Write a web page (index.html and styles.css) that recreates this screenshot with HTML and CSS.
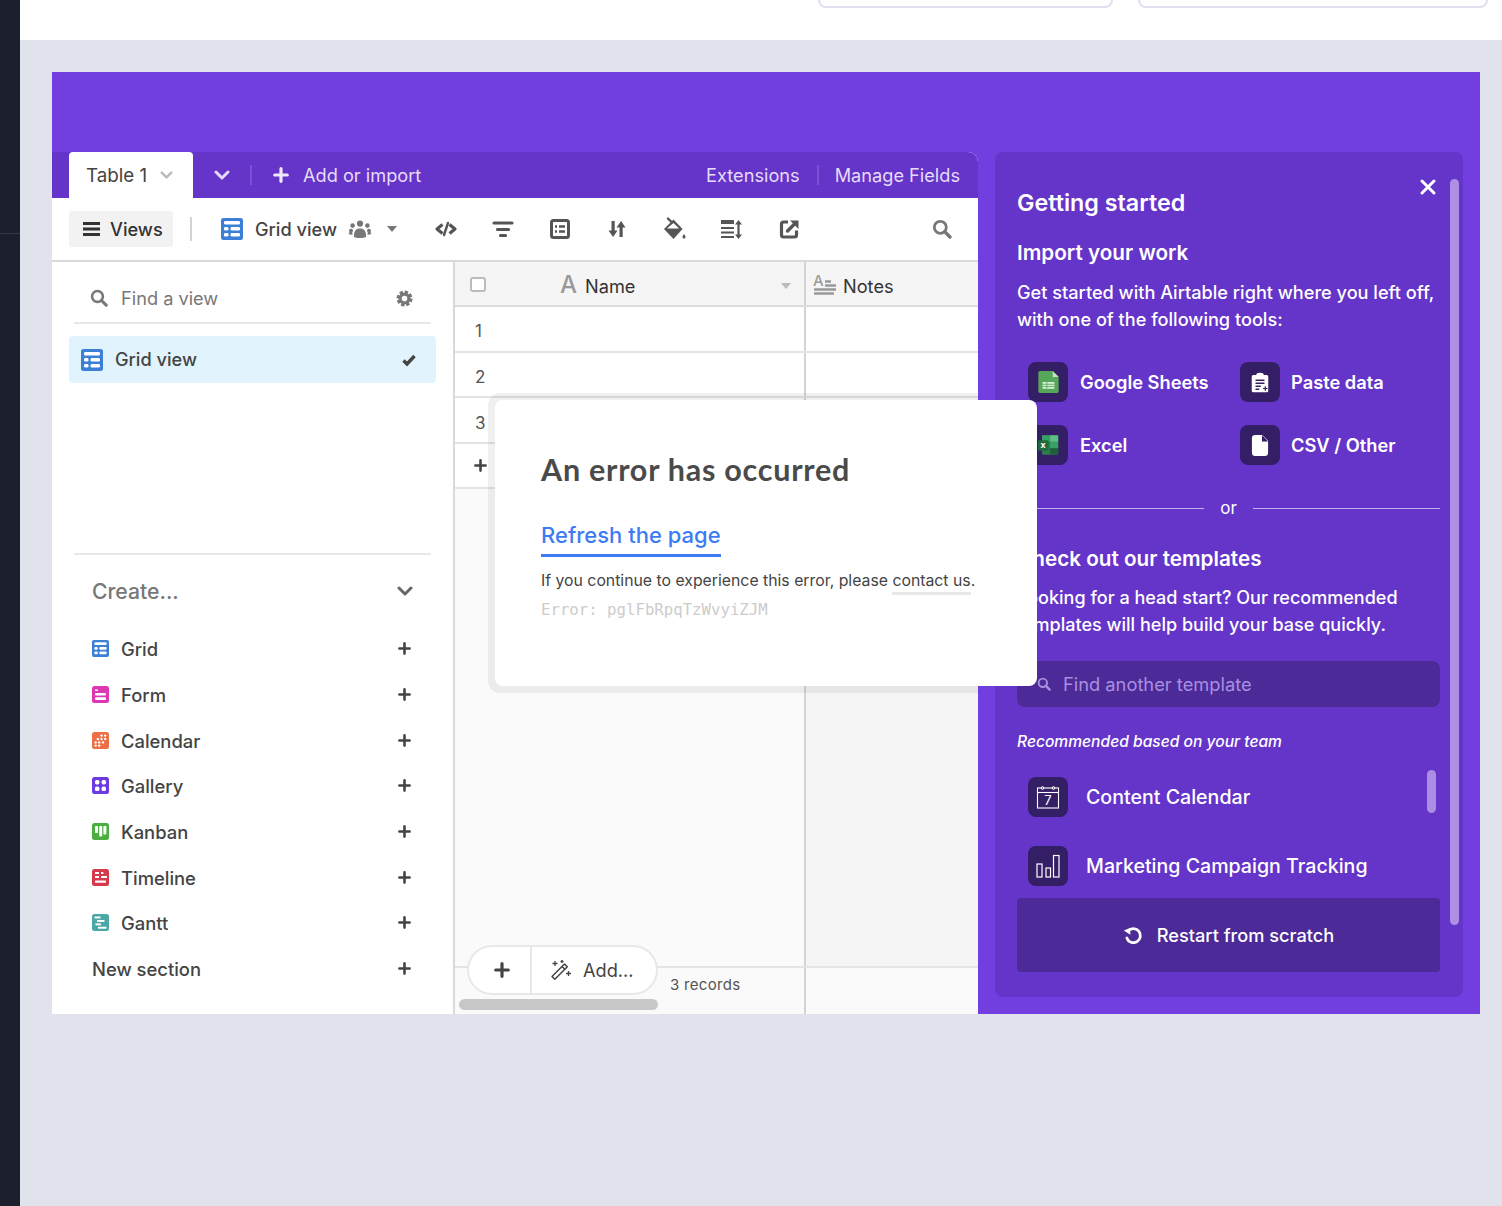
FILE: index.html
```html
<!DOCTYPE html>
<html lang="en">
<head>
<meta charset="utf-8">
<title>Getting started</title>
<link rel="stylesheet" href="styles.css">
</head>
<body>
<svg class="defs" width="0" height="0" aria-hidden="true">
  <defs>
    <symbol id="grid" viewBox="0 0 22 22">
      <rect width="22" height="22" rx="2.5" fill="currentColor"/>
      <g fill="#fff"><rect x="3" y="3" width="16" height="3.6" rx="1.4"/><rect x="3" y="9" width="4.5" height="3.6" rx="1.4"/><rect x="9.5" y="9" width="9.5" height="3.6" rx="1.4"/><rect x="3" y="15" width="4.5" height="3.6" rx="1.4"/><rect x="9.5" y="15" width="9.5" height="3.6" rx="1.4"/></g>
    </symbol>
    <symbol id="form" viewBox="0 0 17 17">
      <rect width="17" height="17" rx="2.5" fill="currentColor"/>
      <g fill="#fff"><rect x="3" y="3.5" width="3" height="1.4"/><rect x="3" y="7" width="11" height="2.6" rx="1"/><rect x="3" y="11.3" width="11" height="2.6" rx="1"/></g>
    </symbol>
    <symbol id="cal" viewBox="0 0 17 17">
      <rect width="17" height="17" rx="2.5" fill="currentColor"/>
      <g fill="#fff"><circle cx="9.5" cy="3.6" r="1.2"/><circle cx="13.2" cy="3.6" r="1.2"/><circle cx="5.8" cy="7" r="1.2"/><circle cx="9.5" cy="7" r="1.2"/><circle cx="13.2" cy="7" r="1.2"/><circle cx="3.6" cy="10.4" r="1.2"/><circle cx="7.2" cy="10.4" r="1.2"/><circle cx="11" cy="10.4" r="1.2"/><circle cx="3.6" cy="13.6" r="1.2"/><circle cx="7.2" cy="13.6" r="1.2"/></g>
    </symbol>
    <symbol id="gallery" viewBox="0 0 17 17">
      <rect width="17" height="17" rx="2.5" fill="currentColor"/>
      <g fill="#fff"><rect x="3" y="3" width="4.4" height="4.4" rx="1.6"/><rect x="9.6" y="3" width="4.4" height="4.4" rx="1.6"/><rect x="3" y="9.6" width="4.4" height="4.4" rx="1.6"/><rect x="9.6" y="9.6" width="4.4" height="4.4" rx="1.6"/></g>
    </symbol>
    <symbol id="kanban" viewBox="0 0 17 17">
      <rect width="17" height="17" rx="2.5" fill="currentColor"/>
      <g fill="#fff"><rect x="3" y="3" width="3" height="7" rx=".7"/><rect x="7.2" y="3" width="3" height="10.5" rx=".7"/><rect x="11.4" y="3" width="3" height="8.5" rx=".7"/></g>
    </symbol>
    <symbol id="timeline" viewBox="0 0 17 17">
      <rect width="17" height="17" rx="2.5" fill="currentColor"/>
      <g fill="#fff"><rect x="3" y="3" width="4" height="2"/><rect x="9" y="3" width="2.4" height="2"/><rect x="3" y="7" width="4" height="2"/><rect x="9" y="7" width="6" height="2"/><rect x="3" y="11.4" width="11" height="2.4" rx=".6"/></g>
    </symbol>
    <symbol id="gantt" viewBox="0 0 17 17">
      <rect width="17" height="17" rx="2.5" fill="currentColor"/>
      <g fill="#fff"><rect x="2.5" y="2.5" width="6" height="1.9"/><rect x="5" y="6" width="7.5" height="1.9"/><rect x="3.5" y="9.4" width="5.5" height="1.9"/><rect x="6" y="12.8" width="8.5" height="1.9"/></g>
    </symbol>
    <symbol id="search" viewBox="0 0 20 20">
      <circle cx="8.3" cy="8.3" r="6" fill="none" stroke="currentColor" stroke-width="2.8"/>
      <path d="M12.8 12.8 18 18" fill="none" stroke="currentColor" stroke-width="3.4" stroke-linecap="round"/>
    </symbol>
    <symbol id="plus" viewBox="0 0 14 14">
      <path d="M7 1.5v11M1.5 7h11" fill="none" stroke="currentColor" stroke-width="2.8" stroke-linecap="round"/>
    </symbol>
    <symbol id="chev" viewBox="0 0 16 10">
      <path d="M2 2l6 6 6-6" fill="none" stroke="currentColor" stroke-width="3" stroke-linecap="round" stroke-linejoin="round"/>
    </symbol>
  </defs>
</svg>

<aside class="rail"><span class="rail-line"></span></aside>

<div class="page">
  <header class="topbar">
    <span class="stub stub-a"></span>
    <span class="stub stub-b"></span>
  </header>

  <div class="stage">
    <div class="app">
      <section class="workspace">
        <div class="tabbar">
          <div class="tab">
            <span class="tab-name">Table 1</span>
            <svg class="tab-chev"><use href="#chev"/></svg>
          </div>
          <svg class="tables-chev"><use href="#chev"/></svg>
          <span class="tab-sep"></span>
          <svg class="tab-plus"><use href="#plus"/></svg>
          <span class="tab-add">Add or import</span>
          <span class="tab-right">Extensions</span>
          <span class="tab-sep tab-sep-right"></span>
          <span class="tab-manage">Manage Fields</span>
        </div>

        <div class="toolbar">
          <button class="views-btn">
            <svg class="burger" viewBox="0 0 17 14"><path d="M0 1.5h17M0 7h17M0 12.5h17" stroke="currentColor" stroke-width="2.8"/></svg>
            <span>Views</span>
          </button>
          <span class="tool-sep"></span>
          <svg class="grid-ico"><use href="#grid"/></svg>
          <span class="view-name">Grid view</span>
          <svg class="people" viewBox="0 0 24 18"><g fill="currentColor"><circle cx="12" cy="3.6" r="3.1"/><circle cx="4.6" cy="5.6" r="2.3"/><circle cx="19.4" cy="5.6" r="2.3"/><circle cx="3" cy="10.8" r="2"/><circle cx="21" cy="10.8" r="2"/><path d="M6 17c-.4-6 2-8.5 6-8.5s6.4 2.5 6 8.5c-3 1.4-9 1.4-12 0z"/><path d="M.6 14c.4-2 1.8-2.5 3.4-2.5l.6 3.5z"/><path d="M23.4 14c-.4-2-1.8-2.5-3.4-2.5l-.6 3.500z"/></g></svg>
          <span class="caret"></span>
          <div class="tools">
            <svg viewBox="0 0 24 24"><g fill="none" stroke="currentColor" stroke-linejoin="round"><path d="M8.5 7.5 3 12l5.500 4.500" stroke-width="3.200"/><path d="M15.5 7.5 21 12l-5.500 4.500" stroke-width="3.200"/><path d="M14 6 10 18" stroke-width="2.400" stroke-linecap="round"/></g></svg>
            <svg viewBox="0 0 24 24"><path d="M3 6h18M6.500 12.500h11M9.500 18.500h5" fill="none" stroke="currentColor" stroke-width="3.200" stroke-linecap="round"/></svg>
            <svg viewBox="0 0 24 24"><rect x="3.500" y="3.500" width="17" height="17" rx="2" fill="none" stroke="currentColor" stroke-width="3"/><path d="M7 9.500h2M11 9.500h6M7 14.500h2M11 14.500h6" stroke="currentColor" stroke-width="2.400"/></svg>
            <svg viewBox="0 0 24 24"><g fill="currentColor"><path d="M6.500 4h3.200v9.500h2.800L8.100 20l-4.600-6.500h3z"/><path d="M14.500 20h3.200v-9.500h2.800L16.100 4l-4.600 6.500h3z"/></g></svg>
            <svg viewBox="0 0 24 24"><path d="M2 12 11.500 2.500l9 9.500-9 10z" fill="currentColor"/><path d="M5 11.500h12L11.500 6z" fill="#fff"/><path d="M6 1.500l4 4" stroke="currentColor" stroke-width="2.400" stroke-linecap="round"/><path d="M22 17c1 1.500 1.500 2.200 1.500 3a1.500 1.500 0 0 1-3 0c0-.8.500-1.500 1.500-3z" fill="currentColor"/></svg>
            <svg viewBox="0 0 24 24"><path d="M2 5h13" stroke="currentColor" stroke-width="4"/><path d="M2 11h13M2 15.500h13M2 20h13" stroke="currentColor" stroke-width="2"/><path d="M19.500 5v14" stroke="currentColor" stroke-width="2.200"/><path d="M16 7.500 19.500 3 23 7.500zM16 17.500l3.500 4.500 3.500-4.500z" fill="currentColor"/></svg>
            <svg viewBox="0 0 24 24"><g fill="none" stroke="currentColor"><path d="M11 5H6.500A2 2 0 0 0 4.500 7v11a2 2 0 0 0 2 2h11a2 2 0 0 0 2-2v-4.500" stroke-width="3.200"/><path d="M10.500 14 17 7.500" stroke-width="3.400" stroke-linecap="round"/></g><path d="M13 3.500h8.500V12z" fill="currentColor"/></svg>
          </div>
          <svg class="tool-search"><use href="#search"/></svg>
        </div>

        <div class="body">
          <nav class="sidebar">
            <div class="find">
              <svg class="find-ico"><use href="#search"/></svg>
              <span class="find-text">Find a view</span>
              <svg class="gear" viewBox="0 0 20 20"><circle cx="10" cy="10" r="5.200" fill="none" stroke="currentColor" stroke-width="3.800"/><circle cx="10" cy="10" r="7.800" fill="none" stroke="currentColor" stroke-width="3.200" stroke-dasharray="4 2.130"/></svg>
            </div>
            <div class="views">
              <div class="view-item">
                <svg class="grid-ico"><use href="#grid"/></svg>
                <span class="view-item-name">Grid view</span>
                <svg class="check" viewBox="0 0 14 12"><path d="M1.500 6.500 5 10l7.500-8" fill="none" stroke="currentColor" stroke-width="3.400"/></svg>
              </div>
            </div>
            <div class="create">
              <div class="create-head">
                <span>Create...</span>
                <svg class="create-chev"><use href="#chev"/></svg>
              </div>
              <div class="create-row"><svg class="c-ico c-grid"><use href="#grid"/></svg><span>Grid</span><svg class="c-plus"><use href="#plus"/></svg></div>
              <div class="create-row"><svg class="c-ico c-form"><use href="#form"/></svg><span>Form</span><svg class="c-plus"><use href="#plus"/></svg></div>
              <div class="create-row"><svg class="c-ico c-cal"><use href="#cal"/></svg><span>Calendar</span><svg class="c-plus"><use href="#plus"/></svg></div>
              <div class="create-row"><svg class="c-ico c-gallery"><use href="#gallery"/></svg><span>Gallery</span><svg class="c-plus"><use href="#plus"/></svg></div>
              <div class="create-row"><svg class="c-ico c-kanban"><use href="#kanban"/></svg><span>Kanban</span><svg class="c-plus"><use href="#plus"/></svg></div>
              <div class="create-row"><svg class="c-ico c-timeline"><use href="#timeline"/></svg><span>Timeline</span><svg class="c-plus"><use href="#plus"/></svg></div>
              <div class="create-row"><svg class="c-ico c-gantt"><use href="#gantt"/></svg><span>Gantt</span><svg class="c-plus"><use href="#plus"/></svg></div>
              <div class="create-row"><span>New section</span><svg class="c-plus"><use href="#plus"/></svg></div>
            </div>
          </nav>

          <div class="table">
            <div class="thead">
              <div class="cell-name">
                <span class="checkbox"></span>
                <span class="field-a">A</span>
                <span class="field-label">Name</span>
                <span class="field-caret"></span>
              </div>
              <div class="cell-notes">
                <svg class="notes-ico" viewBox="0 0 24 20"><text x="0" y="11" class="notes-a">A</text><path d="M12 6.500h6M12 10.500h11M1 14.500h22M1 18.500h20" stroke="#999" stroke-width="2.400"/></svg>
                <span class="field-label">Notes</span>
              </div>
            </div>
            <div class="row"><div class="row-num">1</div><div class="row-notes"></div></div>
            <div class="row"><div class="row-num">2</div><div class="row-notes"></div></div>
            <div class="row"><div class="row-num">3</div><div class="row-notes"></div></div>
            <div class="row row-add"><div class="row-num"><svg class="add-plus"><use href="#plus"/></svg></div></div>
            <div class="table-rest"><div class="rest-left"></div><div class="rest-right"></div></div>
            <div class="tfoot">
              <div class="foot-left"><span class="records">3 records</span></div>
              <div class="foot-right"></div>
            </div>
            <div class="add-pill">
              <span class="pill-plus"><svg><use href="#plus"/></svg></span>
              <span class="pill-add">
                <svg viewBox="0 0 22 22"><g fill="none" stroke="currentColor" stroke-width="1.500" stroke-linejoin="round"><path d="M2 17.500 14.500 5l2.800 2.800L4.800 20.300z"/><path d="M12 7.500l2.800 2.800"/></g><path d="M5 2v5M2.500 4.500h5M18.500 12v5M16 14.500h5M12 1v3M10.500 2.500h3" stroke="currentColor" stroke-width="1.300"/></svg>
                <span>Add...</span>
              </span>
            </div>
            <span class="hscroll"></span>
          </div>
        </div>
        <div class="modal-ring"></div>
      </section>

      <aside class="panel">
        <svg class="close" viewBox="0 0 16 16"><path d="M2 2l12 12M14 2 2 14" stroke="#fff" stroke-width="3" stroke-linecap="round"/></svg>
        <span class="panel-scroll"></span>
        <h2 class="panel-title">Getting started</h2>
        <h3 class="panel-sub">Import your work</h3>
        <p class="panel-text">Get started with Airtable right where you left off,<br>with one of the following tools:</p>
        <div class="tools-grid">
          <div class="tool-item">
            <span class="box">
              <svg viewBox="0 0 24 26" class="box-ico"><path d="M2 0h15l7 7v17a2 2 0 0 1-2 2H2a2 2 0 0 1-2-2V2a2 2 0 0 1 2-2z" fill="#57a75a"/><path d="M17 0l7 7h-7z" fill="#c4e3c0"/><path d="M5 13h14v8H5z" fill="#d9efd5"/><path d="M5 15.700h14M5 18.300h14M10 13v8" stroke="#57a75a"/></svg>
            </span>
            <span class="tool-name">Google Sheets</span>
          </div>
          <div class="tool-item">
            <span class="box">
              <svg viewBox="0 0 24 26" class="box-ico box-ico-w"><path d="M3 3h4a5 3 0 0 1 10 0h4a2 2 0 0 1 2 2v19a2 2 0 0 1-2 2H3a2 2 0 0 1-2-2V5a2 2 0 0 1 2-2z" fill="#fff"/><path d="M6 10h12M6 14h12M6 18h7M6 22h5" stroke="#341e66" stroke-width="1.800"/><path d="M19 18v6M16 21h6" stroke="#341e66" stroke-width="1.600"/></svg>
            </span>
            <span class="tool-name">Paste data</span>
          </div>
          <div class="tool-item">
            <span class="box">
              <svg viewBox="0 0 26 26" class="box-ico"><rect x="5" y="1" width="20" height="24" rx="1.500" fill="#2f7d4f"/><rect x="15" y="1" width="10" height="8" fill="#5fbf85"/><rect x="15" y="9" width="10" height="8" fill="#37a066"/><rect x="5" y="1" width="10" height="8" fill="#37a066"/><rect x="15" y="17" width="10" height="8" fill="#1f5f3a"/><rect x="0" y="7" width="13" height="13" rx="1.500" fill="#1f6b3f"/><text x="3" y="17" class="excel-x">x</text></svg>
            </span>
            <span class="tool-name">Excel</span>
          </div>
          <div class="tool-item">
            <span class="box">
              <svg viewBox="0 0 20 26" class="box-ico box-ico-w"><path d="M4 0h9l7 7v15a4 4 0 0 1-4 4H4a4 4 0 0 1-4-4V4a4 4 0 0 1 4-4z" fill="#fff"/><path d="M12.500 0v8H20z" fill="#341e66"/></svg>
            </span>
            <span class="tool-name">CSV / Other</span>
          </div>
        </div>
        <div class="or-row"><span class="or-line"></span><span class="or-text">or</span><span class="or-line"></span></div>
        <h3 class="panel-sub panel-sub-2">Check out our templates</h3>
        <p class="panel-text panel-text-2">Looking for a head start? Our recommended<br>templates will help build your base quickly.</p>
        <div class="tpl-search">
          <svg class="tpl-ico"><use href="#search"/></svg>
          <span>Find another template</span>
        </div>
        <p class="recommended">Recommended based on your team</p>
        <div class="tpl-list">
          <span class="inner-scroll"></span>
          <div class="tpl-item">
            <span class="box">
              <svg viewBox="0 0 24 24" class="box-ico-lg"><g fill="none" stroke="#fff" stroke-width="1.100"><rect x="1.500" y="3" width="21" height="20"/><path d="M1.500 7.500h21"/><circle cx="6.500" cy="3" r="1.200" fill="#341e66"/><circle cx="17.500" cy="3" r="1.200" fill="#341e66"/></g><text x="12" y="20" class="cal-7">7</text></svg>
            </span>
            <span class="tpl-name">Content Calendar</span>
          </div>
          <div class="tpl-item tpl-item-2">
            <span class="box">
              <svg viewBox="0 0 24 24" class="box-ico-lg"><g fill="none" stroke="#fff" stroke-width="1.200"><rect x="1" y="10" width="5" height="13"/><rect x="10" y="14" width="4.500" height="9"/><rect x="17.500" y="1.500" width="5.500" height="21.500"/></g></svg>
            </span>
            <span class="tpl-name">Marketing Campaign Tracking</span>
          </div>
        </div>
        <button class="restart">
          <svg viewBox="0 0 20 20" class="restart-ico"><path d="M5 6.200A7 7 0 1 1 3.800 13" fill="none" stroke="#fff" stroke-width="2.800" stroke-linecap="round"/><path d="M.8 5.500 7 3l.4 6.800z" fill="#fff"/></svg>
          <span>Restart from scratch</span>
        </button>
      </aside>

      <div class="modal">
        <h1 class="modal-title">An error has occurred</h1>
        <a class="modal-link">Refresh the page</a>
        <p class="modal-text">If you continue to experience this error, please <span class="contact">contact us</span>.</p>
        <p class="modal-code">Error: pglFbRpqTzWvyiZJM</p>
      </div>
    </div>
  </div>
</div>
</body>
</html>
```
FILE: styles.css
```css
* { box-sizing: border-box; }
html, body { margin: 0; height: 100%; }
body {
  display: flex;
  height: 1206px;
  overflow: hidden;
  background: #e0e3ec;
  font-family: Inter, "Liberation Sans", sans-serif;
  color: #444;
}
.defs { position: absolute; }
svg { display: block; flex: none; overflow: visible; }

.rail { width: 20px; flex: none; background: #1c1f2e; padding-top: 233px; }
.rail-line { display: block; height: 1px; background: #33374a; }

.page { flex: 1; min-width: 0; display: flex; flex-direction: column; }
.topbar { height: 40px; flex: none; background: #fff; display: flex; justify-content: flex-end; gap: 25px; padding-right: 14px; }
.stub { height: 8px; border: 2px solid #e2dff0; border-top: 0; border-radius: 0 0 8px 8px; }
.stub-a { width: 295px; }
.stub-b { width: 350px; }

.stage { padding: 32px 22px 0 32px; }
.app { position: relative; height: 942px; padding-top: 80px; background: #733ee0; display: flex; gap: 17px; }

/* workspace */
.workspace { position: relative; width: 926px; flex: none; display: flex; flex-direction: column; overflow: hidden; border-top-right-radius: 10px; background: #fff; }
.tabbar { height: 46px; flex: none; background: #6534c9; display: flex; align-items: center; padding-left: 17px; font-size: 18.2px; color: #e6dcf8; }
.tab { width: 124px; height: 46px; background: #fff; border-radius: 4px 4px 0 0; display: flex; align-items: center; padding-left: 17px; color: #444; }
.tab-name { font-size: 18.8px; }
.tab-chev { width: 13px; height: 8px; margin-left: 13px; color: #bbb; }
.tables-chev { width: 16px; height: 10px; margin-left: 21px; color: #e6dcf8; }
.tab-sep { width: 2px; height: 20px; background: #7a50d4; margin-left: 20px; }
.tab-plus { width: 16px; height: 16px; margin-left: 21px; color: #efe8fb; }
.tab-add { margin-left: 14px; }
.tab-right { margin-left: auto; }
.tab-sep-right { margin-left: 17px; }
.tab-manage { margin-left: 16px; margin-right: 18px; }

.toolbar { height: 64px; flex: none; display: flex; align-items: center; padding: 0 26px 0 17px; border-bottom: 2px solid #d9d9d9; }
.views-btn { width: 104px; height: 36px; border: 0; border-radius: 3px; background: #f2f2f2; display: flex; align-items: center; padding: 0 0 0 14px; font: inherit; font-size: 18.2px; font-weight: 500; color: #333; }
.burger { width: 17px; height: 14px; margin-right: 10px; color: #333; }
.tool-sep { width: 2px; height: 24px; background: #d4d4d4; margin-left: 17px; }
.grid-ico { width: 22px; height: 22px; color: #3b7fd6; }
.toolbar .grid-ico { margin-left: 29px; }
.view-name { margin-left: 12px; font-size: 18.2px; font-weight: 500; }
.people { width: 24px; height: 18px; margin-left: 11px; color: #777; }
.caret { width: 0; height: 0; margin-left: 15px; border: 5px solid transparent; border-top: 6px solid #777; border-bottom: 0; }
.tools { display: flex; gap: 33px; margin-left: 37px; color: #555; }
.tools svg { width: 24px; height: 24px; }
.tools svg:last-child { margin-left: 1px; }
.tool-search { width: 20px; height: 20px; margin-left: auto; color: #777; }

.body { flex: 1; min-height: 0; display: flex; }

/* sidebar */
.sidebar { width: 403px; flex: none; border-right: 2px solid #d9d9d9; display: flex; flex-direction: column; }
.find { height: 62px; margin: 0 22px; display: flex; align-items: center; padding: 12px 18px 0 16px; border-bottom: 2px solid #e8e8e8; color: #777; }
.find-ico { width: 18px; height: 18px; }
.find-text { margin-left: 13px; font-size: 18.2px; }
.gear { width: 17px; height: 17px; margin-left: auto; }
.views { height: 229px; padding: 12px 17px 0; }
.view-item { height: 47px; border-radius: 4px; background: #e1f3fc; display: flex; align-items: center; padding: 0 20px 0 12px; }
.view-item-name { margin-left: 12px; padding-bottom: 2px; font-size: 18.2px; font-weight: 500; }
.check { width: 14px; height: 12px; margin-left: auto; color: #444; }
.create { margin: 0 22px; border-top: 2px solid #e8e8e8; }
.create-head { height: 71px; display: flex; align-items: center; justify-content: space-between; padding: 0 18px; font-size: 21.2px; font-weight: 500; color: #777; }
.create-chev { width: 16px; height: 10px; color: #666; }
.create-row { height: 45.7px; display: flex; align-items: center; padding: 0 19px 0 18px; font-size: 18.4px; font-weight: 500; color: #444; }
.create-row span { padding-top: 1px; }
.c-ico { width: 17px; height: 17px; margin-right: 12px; }
.c-plus { width: 13px; height: 13px; margin-left: auto; margin-right: 1px; color: #444; }
.c-grid { color: #3b7fd6; }
.c-form { color: #dd38b4; }
.c-cal { color: #ec6f45; }
.c-gallery { color: #6b3be0; }
.c-kanban { color: #4bae3f; }
.c-timeline { color: #d6394c; }
.c-gantt { color: #4aa9a5; }

/* table */
.table { position: relative; flex: 1; min-width: 0; display: flex; flex-direction: column; background: #fff; }
.thead { height: 45px; flex: none; display: flex; background: #f5f5f5; border-bottom: 2px solid #dcdcdc; font-size: 18.2px; color: #333; }
.cell-name { width: 351px; flex: none; display: flex; align-items: center; padding-left: 16px; border-right: 2px solid #d4d4d4; }
.checkbox { width: 16px; height: 15px; margin: 2px 0 0 -1px; border: 2px solid #bbb; border-radius: 3px; background: #fff; }
.field-a { margin-left: 74px; padding-top: 2px; font-size: 24px; font-weight: 500; color: #999; }
.field-label { margin-left: 8px; padding-top: 4px; }
.field-caret { width: 0; height: 0; margin: 4px 13px 0 auto; border: 5px solid transparent; border-top: 6px solid #bbb; border-bottom: 0; }
.cell-notes { flex: 1; display: flex; align-items: center; padding-left: 7px; }
.cell-notes .field-label { margin-left: 6px; }
.notes-ico { width: 24px; height: 20px; margin-top: 2px; }
.notes-a { font-size: 15px; font-weight: 500; fill: #999; font-family: Inter, sans-serif; }
.row { height: 45.67px; flex: none; display: flex; border-bottom: 2px solid #e4e4e4; }
.row-add { height: 45.3px; }
.row-num { width: 351px; flex: none; padding: 5px 0 0 20px; display: flex; align-items: center; font-size: 17px; color: #555; border-right: 2px solid #d4d4d4; }
.row-add .row-num { border-right: 0; padding: 0 0 0 20px; }
.row-notes { flex: 1; }
.add-plus { width: 13px; height: 13px; margin-left: -1px; color: #444; }
.table-rest { flex: 1; min-height: 0; display: flex; }
.rest-left { width: 351px; flex: none; background: #fafafa; border-right: 2px solid #d4d4d4; }
.rest-right { flex: 1; background: #f5f5f5; }
.tfoot { height: 48px; flex: none; display: flex; border-top: 2px solid #e4e4e6; }
.foot-left { width: 351px; flex: none; background: #fafafa; border-right: 2px solid #d4d4d4; padding: 6px 0 0 215px; }
.foot-right { flex: 1; background: #fafafa; }
.records { font-size: 15px; letter-spacing: .3px; color: #555; }
.add-pill { position: absolute; left: 12px; bottom: 19px; width: 191px; height: 50px; display: flex; background: #fff; border: 2px solid #e8e8e8; border-radius: 25px; font-size: 18.2px; color: #444; }
.pill-plus { width: 63px; padding-left: 4px; display: flex; align-items: center; justify-content: center; border-right: 2px solid #e8e8e8; }
.pill-plus svg { width: 16px; height: 16px; }
.pill-add { flex: 1; display: flex; align-items: center; padding-left: 18px; gap: 11px; }
.pill-add svg { width: 22px; height: 22px; }
.hscroll { position: absolute; left: 4px; bottom: 4px; width: 199px; height: 11px; border-radius: 6px; background: #c8c8c8; }

.modal-ring { position: absolute; left: 436px; top: 241px; width: 560px; height: 300px; border-radius: 12px; background: rgba(0, 0, 0, .06); }

/* panel */
.panel { position: relative; width: 468px; height: 845px; flex: none; background: #6534c9; border-radius: 8px; padding: 0 23px 0 22px; color: #fff; }
.close { position: absolute; left: 425px; top: 27px; width: 16px; height: 16px; }
.panel-scroll { position: absolute; left: 455px; top: 27px; width: 9px; height: 746px; border-radius: 5px; background: #ad90e4; }
.panel-title { margin: 0; padding-top: 35px; font-size: 23.3px; line-height: 32px; font-weight: 600; }
.panel-sub { margin: 19px 0 0; font-size: 20.7px; line-height: 30px; font-weight: 600; }
.panel-text { margin: 11px 0 0; font-size: 18.15px; line-height: 27px; font-weight: 500; white-space: nowrap; }
.tools-grid { margin: 29px 0 0 11px; display: grid; grid-template-columns: 212px 1fr; row-gap: 23px; }
.tool-item { display: flex; align-items: center; }
.tool-item:nth-child(even) .tool-name { margin-left: 11px; }
.box { width: 40px; height: 40px; flex: none; border-radius: 8px; background: #341e66; display: flex; align-items: center; justify-content: center; }
.box-ico { width: 21px; height: 22px; }
.box-ico-w { width: 18px; height: 21px; }
.box-ico-lg { width: 24px; height: 24px; }
.tool-name { margin-left: 12px; font-size: 18.3px; font-weight: 600; }
.or-row { margin-top: 32px; height: 22px; display: flex; align-items: center; gap: 16px; font-size: 17px; }
.or-line { flex: 1; height: 1px; background: #c3aeee; }
.panel-sub-2 { margin-top: 25px; }
.panel-text-2 { margin-top: 10px; font-size: 18.05px; }
.tpl-search { margin-top: 23px; height: 46px; border-radius: 8px; background: #4c2a97; display: flex; align-items: center; padding-left: 20px; font-size: 18.3px; color: #a88fe0; }
.tpl-ico { width: 14px; height: 14px; margin-right: 12px; }
.recommended { margin: 24px 0 0; font-size: 15.6px; line-height: 22px; font-style: italic; font-weight: 500; }
.tpl-list { position: relative; margin-top: 24px; padding-left: 11px; height: 121px; }
.inner-scroll { position: absolute; left: 410px; top: -7px; width: 9px; height: 43px; border-radius: 5px; background: #ab8ee4; }
.tpl-item { display: flex; align-items: center; }
.tpl-item-2 { margin-top: 29px; }
.tpl-name { margin-left: 18px; font-size: 19.6px; font-weight: 500; }
.cal-7 { font-size: 13px; fill: #fff; text-anchor: middle; font-family: Inter, sans-serif; }
.excel-x { font-size: 11px; fill: #fff; font-weight: 700; font-family: Inter, sans-serif; }
.restart { width: 423px; height: 74px; border: 0; border-radius: 4px; background: #4c2a97; display: flex; align-items: center; justify-content: center; gap: 14px; font: inherit; font-size: 18.2px; font-weight: 500; color: #fff; }
.restart-ico { width: 20px; height: 20px; }

/* modal */
.modal { position: absolute; left: 443px; top: 328px; width: 542px; height: 286px; background: #fff; border-radius: 8px; padding: 49px 0 0 46px; }
.modal-title { margin: 0; font-family: Lato, sans-serif; font-size: 30.5px; line-height: 40px; font-weight: 700; letter-spacing: .75px; color: #4a4a4a; }
.modal-link { display: inline-block; margin-top: 31px; padding-bottom: 4px; border-bottom: 3px solid #3d7bf5; font-size: 22px; line-height: 30px; font-weight: 500; color: #3d7bf5; }
.modal-text { margin: 12px 0 0; font-size: 15.8px; line-height: 24px; color: #444; white-space: nowrap; }
.contact { display: inline-block; line-height: 22px; border-bottom: 3px solid #e8e8e8; }
.modal-code { margin: 3px 0 0; font-family: "DejaVu Sans Mono", monospace; font-size: 15.7px; line-height: 24px; color: #ccc; }
```
